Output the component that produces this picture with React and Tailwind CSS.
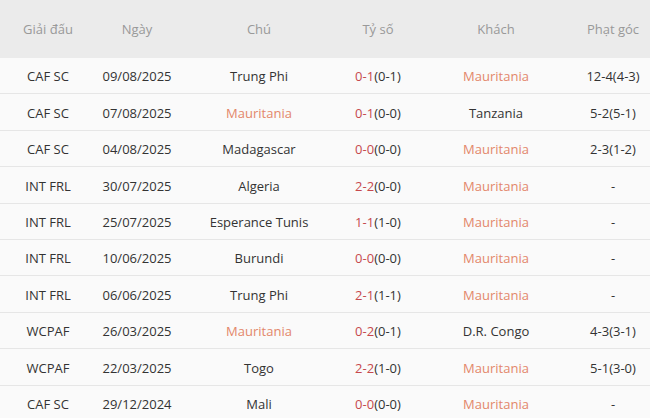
import React from "react";

const rows = [
  ["CAF SC", "09/08/2025", "Trung Phi", false, "0-1", "(0-1)", "Mauritania", true, "12-4(4-3)"],
  ["CAF SC", "07/08/2025", "Mauritania", true, "0-1", "(0-0)", "Tanzania", false, "5-2(5-1)"],
  ["CAF SC", "04/08/2025", "Madagascar", false, "0-0", "(0-0)", "Mauritania", true, "2-3(1-2)"],
  ["INT FRL", "30/07/2025", "Algeria", false, "2-2", "(0-0)", "Mauritania", true, "-"],
  ["INT FRL", "25/07/2025", "Esperance Tunis", false, "1-1", "(1-0)", "Mauritania", true, "-"],
  ["INT FRL", "10/06/2025", "Burundi", false, "0-0", "(0-0)", "Mauritania", true, "-"],
  ["INT FRL", "06/06/2025", "Trung Phi", false, "2-1", "(1-1)", "Mauritania", true, "-"],
  ["WCPAF", "26/03/2025", "Mauritania", true, "0-2", "(0-1)", "D.R. Congo", false, "4-3(3-1)"],
  ["WCPAF", "22/03/2025", "Togo", false, "2-2", "(1-0)", "Mauritania", true, "5-1(3-0)"],
  ["CAF SC", "29/12/2024", "Mali", false, "0-0", "(0-0)", "Mauritania", true, "-"],
];

const cols = "grid grid-cols-[96px_82px_162px_76px_160px_74px]";

export default function App() {
  return (
    <div
      className="w-[650px] h-[418px] overflow-hidden bg-[#fafafa] text-[13px] text-[#333]"
      style={{ fontFamily: '"Open Sans", "Liberation Sans", sans-serif' }}
    >
      <div className={`${cols} h-[58px] pt-[2px] bg-[#ebebeb] text-[#999] items-center text-center`}>
        <div>Giải đấu</div>
        <div>Ngày</div>
        <div>Chú</div>
        <div>Tỷ số</div>
        <div>Khách</div>
        <div>Phạt góc</div>
      </div>
      {rows.map((r, i) => (
        <div
          key={i}
          className={`${cols} h-[36.4px] pt-[3px] box-border border-b border-[#e6e6e6] items-center text-center`}
        >
          <div>{r[0]}</div>
          <div>{r[1]}</div>
          <div className={r[3] ? "text-[#e3876a]" : ""}>{r[2]}</div>
          <div>
            <span className="text-[#c6494d]">{r[4]}</span>
            {r[5]}
          </div>
          <div className={r[7] ? "text-[#e3876a]" : ""}>{r[6]}</div>
          <div>{r[8]}</div>
        </div>
      ))}
    </div>
  );
}
